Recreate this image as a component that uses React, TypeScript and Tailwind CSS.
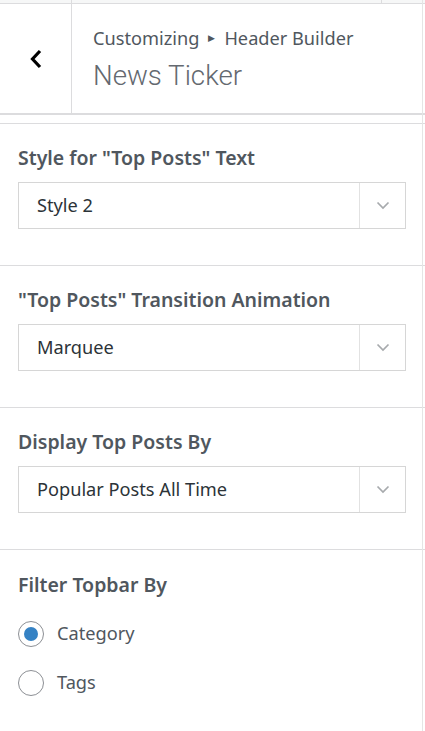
import React from "react";

const font = { fontFamily: '"Noto Sans", "Open Sans", Arial, sans-serif' };

function Select({ value }: { value: string }) {
  return (
    <div className="flex h-[47px] w-[388px] border border-[#d6d6d6] bg-white">
      <div className="flex flex-1 items-center pl-[18px] text-[18.2px] text-[#2c3338]">{value}</div>
      <div className="flex w-[46px] items-center justify-center border-l border-[#e2e2e2]">
        <svg width="14" height="9" viewBox="0 0 14 9" fill="none">
          <path d="M1.5 1.5 L7 7 L12.5 1.5" stroke="#a7aaad" strokeWidth="1.7" />
        </svg>
      </div>
    </div>
  );
}

function Section({ label, value }: { label: string; value: string }) {
  return (
    <div className="border-b border-[#dcdcde] pl-[18px] pt-[22px] pb-[36px]">
      <div className="mb-[12px] h-[24px] text-[19.5px] font-semibold leading-[24px] text-[#50575e]">{label}</div>
      <Select value={value} />
    </div>
  );
}

function Radio({ checked, label }: { checked: boolean; label: string }) {
  return (
    <div className="flex h-[26px] items-center">
      <div className="flex h-[26px] w-[26px] items-center justify-center rounded-full border border-[#8c8f94] bg-white">
        {checked && <div className="h-[14px] w-[14px] rounded-full bg-[#3582c4]" />}
      </div>
      <span className="ml-[13px] text-[18.2px] text-[#50575e]">{label}</span>
    </div>
  );
}

export default function App() {
  return (
    <div className="relative h-[731px] w-[425px] overflow-hidden bg-white" style={font}>
      <div className="flex h-[4px] border-b border-[#dcdcde] bg-[#f6f7f7]">
        <div className="w-[72px] border-r border-[#dcdcde]" />
        <div className="w-[310px] border-r border-[#dcdcde]" />
      </div>
      <div className="flex h-[111px] border-b-2 border-[#dcdcde] bg-white">
        <div className="flex w-[72px] items-center justify-center border-r border-[#dcdcde]">
          <svg width="16" height="22" viewBox="0 0 16 22" fill="none">
            <path d="M12 3 L4.5 11 L12 19" stroke="#000" strokeWidth="3.2" />
          </svg>
        </div>
        <div className="flex flex-col pl-[21px] pt-[21px]">
          <div className="flex items-center text-[18.2px] leading-[26px] text-[#50575e]">
            <span>Customizing</span>
            <span className="mx-[9px] text-[9px] text-[#50575e]">▶</span>
            <span>Header Builder</span>
          </div>
          <div
            className="mt-[8px] text-[27.7px] leading-[34px] text-[#646970]"
            style={{ fontFamily: 'Roboto, "Noto Sans", sans-serif', fontWeight: 300 }}
          >
            News Ticker
          </div>
        </div>
      </div>
      <div className="h-[9px] border-b border-[#dcdcde] bg-white" />
      <Section label={'Style for "Top Posts" Text'} value="Style 2" />
      <Section label={'"Top Posts" Transition Animation'} value="Marquee" />
      <Section label="Display Top Posts By" value="Popular Posts All Time" />
      <div className="pl-[18px] pt-[23px]">
        <div className="h-[24px] text-[19.5px] font-semibold leading-[24px] text-[#50575e]">Filter Topbar By</div>
        <div className="mt-[24px] flex flex-col gap-[23px]">
          <Radio checked label="Category" />
          <Radio checked={false} label="Tags" />
        </div>
      </div>
      <div className="absolute right-[2px] top-[0px] h-[731px] w-[1px] bg-[#e5e5e5]" />
    </div>
  );
}
